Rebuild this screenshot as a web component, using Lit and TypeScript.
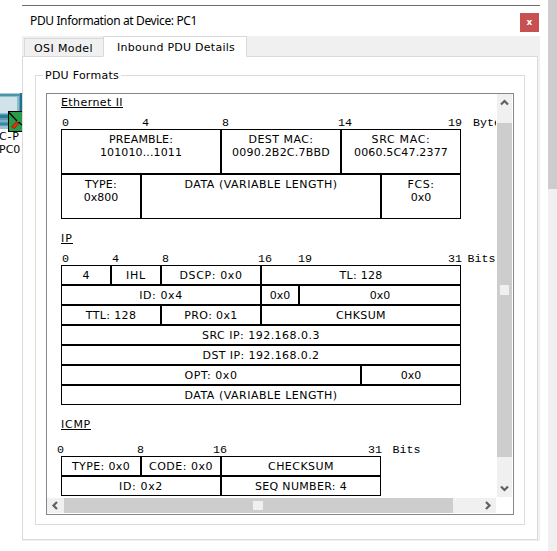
import { LitElement, html, css, svg } from "lit";
import { customElement, property } from "lit/decorators.js";
import { classMap } from "lit/directives/class-map.js";
import { styleMap } from "lit/directives/style-map.js";

interface Cell { w: number; lines: [string, number][]; }
interface Tick { x: number; label: string; }
interface Format { title: string; titleWidth: number; rowHeight: number; rulerGap: number; ticks: Tick[]; rows: Cell[][]; }

const c = (w: number, ...lines: [string, number][]): Cell => ({ w, lines });
const ticks = (...t: [number, string][]): Tick[] => t.map(([x, label]) => ({ x, label }));

const FORMATS: Format[] = [
  {
    title: "Ethernet II", titleWidth: 62, rowHeight: 45, rulerGap: 8,
    ticks: ticks([15, "0"], [95, "4"], [175, "8"], [291, "14"], [401, "19"], [426, "Bytes"]),
    rows: [
      [c(160, ["PREAMBLE:", 64], ["101010...1011", 82]), c(120, ["DEST MAC:", 65], ["0090.2B2C.7BBD", 98]), c(120, ["SRC MAC:", 59], ["0060.5C47.2377", 94])],
      [c(80, ["TYPE:", 32], ["0x800", 34.5]), c(240, ["DATA (VARIABLE LENGTH)", 153]), c(80, ["FCS:", 27], ["0x0", 20.5])],
    ],
  },
  {
    title: "IP", titleWidth: 12, rowHeight: 20, rulerGap: 8,
    ticks: ticks([15, "0"], [65, "4"], [115, "8"], [211, "16"], [251, "19"], [401, "31"], [420.5, "Bits"]),
    rows: [
      [c(50, ["4", 7]), c(50, ["IHL", 20]), c(100, ["DSCP: 0x0", 63]), c(200, ["TL: 128", 43])],
      [c(200, ["ID: 0x4", 43.5]), c(38, ["0x0", 20.5]), c(162, ["0x0", 20.5])],
      [c(100, ["TTL: 128", 50.5]), c(100, ["PRO: 0x1", 53.5]), c(200, ["CHKSUM", 50])],
      [c(400, ["SRC IP: 192.168.0.3", 118])],
      [c(400, ["DST IP: 192.168.0.2", 117])],
      [c(300, ["OPT: 0x0", 53]), c(100, ["0x0", 20.5])],
      [c(400, ["DATA (VARIABLE LENGTH)", 153])],
    ],
  },
  {
    title: "ICMP", titleWidth: 30, rowHeight: 20, rulerGap: 13,
    ticks: ticks([10, "0"], [90, "8"], [166, "16"], [321, "31"], [345.5, "Bits"]),
    rows: [
      [c(80, ["TYPE: 0x0", 58]), c(80, ["CODE: 0x0", 64]), c(160, ["CHECKSUM", 66])],
      [c(160, ["ID: 0x2", 44]), c(160, ["SEQ NUMBER: 4", 92])],
    ],
  },
];

/** A single-line label tracked out (or in) to a fixed advance width. */
@customElement("fit-label")
class FitLabel extends LitElement {
  @property({ type: String }) text = "";
  @property({ type: Number }) width = 0;

  static styles = css`
    :host { display: block; }
    span { display: inline-block; white-space: pre; }
  `;

  updated() {
    const span = this.renderRoot.querySelector("span")!;
    span.style.letterSpacing = "0";
    const natural = span.getBoundingClientRect().width;
    if (this.text.length > 1) {
      const gap = (this.width - natural) / this.text.length;
      span.style.letterSpacing = gap.toFixed(3) + "px";
    }
  }

  render() {
    return html`<span>${this.text}</span>`;
  }
}

@customElement("pdu-format")
class PduFormat extends LitElement {
  @property({ attribute: false }) data!: Format;

  static styles = css`
    :host { display: block; }
    .title { width: max-content; height: 11px; line-height: 13px; margin-left: 14px; border-bottom: 1px solid #000; }
    .ruler { display: flex; height: 13px; font: 11.67px/15px "Liberation Mono", monospace; white-space: pre; }
    .tick { flex: none; }
    .table { margin: 0 0 0 14px; }
    .row { display: flex; }
    .cell { box-sizing: border-box; flex: none; border: 1px solid #000; padding-top: 3px; text-align: center; line-height: 13px; }
  `;

  render() {
    const f = this.data;
    return html`
      <div class="title"><fit-label .text=${f.title} .width=${f.titleWidth}></fit-label></div>
      <div class="ruler" style=${styleMap({ marginTop: f.rulerGap + "px", paddingLeft: f.ticks[0].x + "px" })}>
        ${f.ticks.map((t, i) => {
          const next = f.ticks[i + 1];
          return html`<span class="tick" style=${styleMap({ width: next ? next.x - t.x + "px" : "auto" })}>${t.label}</span>`;
        })}
      </div>
      <div class="table">
        ${f.rows.map((row) => html`<div class="row">
          ${row.map((cell) => html`<div class="cell" style=${styleMap({ width: cell.w + "px", height: f.rowHeight + "px" })}>
            ${cell.lines.map(([t, w]) => html`<fit-label .text=${t} .width=${w}></fit-label>`)}
          </div>`)}
        </div>`)}
      </div>`;
  }
}

const arrow = (points: string) => html`<svg class="arrow" width="9" height="9" viewBox="0 0 9 9">
  ${svg`<path d=${points} fill="none" stroke="#606060" stroke-width="2.2"/>`}
</svg>`;

@customElement("app-root")
class AppRoot extends LitElement {
  static styles = css`
    :host { display: block; position: relative; width: 557px; height: 551px; overflow: hidden; background: #fff; color: #000; font: 11px/13px "DejaVu Sans", Verdana, sans-serif; }
    .layout { display: flex; height: 551px; }
    .canvas { flex: none; width: 22px; padding-top: 93px; overflow: hidden; box-sizing: border-box; }
    .canvas svg { display: block; }
    .device { width: 24px; line-height: 13px; white-space: pre; }
    .model { margin: -2px 0 0 -1px; letter-spacing: 0.8px; }
    .name { margin-left: -1px; }
    .window { flex: none; width: 518px; height: 541px; margin-right: 8px; display: flex; flex-direction: column; padding-top: 5px; box-sizing: border-box; }
    .titlebar { flex: none; height: 31px; box-sizing: border-box; border-top: 1px solid #6d6d6d; display: flex; justify-content: space-between; padding: 7px 1px 0 8px; }
    .caption { font: 12px/16px "Noto Sans", sans-serif; }
    .close { width: 19px; height: 19px; background: #c75050; color: #fff; font: bold 9px/18px "DejaVu Sans", sans-serif; text-align: center; }
    .body { flex: none; height: 505px; background: #f0f0f0; display: flex; flex-direction: column; }
    .tabs { flex: none; height: 21px; display: flex; align-items: flex-end; padding-left: 2px; z-index: 1; }
    .tab { box-sizing: border-box; border: 1px solid #d9d9d9; }
    .tab.rear { width: 80px; height: 19px; margin-right: -1px; padding: 3px 0 0 9px; }
    .tab.front { width: 144px; height: 21px; padding: 4px 0 0 13px; background: #fff; border-bottom-color: #fff; }
    .pane { flex: none; box-sizing: border-box; width: 516px; height: 484px; margin-top: -1px; border: 1px solid #dadada; background: #fff; padding: 18px 12px 14px; }
    .group { box-sizing: border-box; width: 490px; height: 450px; padding: 0 10px; border: 1px solid #dcdcdc; display: flex; flex-direction: column; }
    .legend { flex: none; width: max-content; height: 13px; margin: -7px 0 11px -3px; padding: 0 2px; background: #fff; }
    .frame { box-sizing: border-box; width: 468px; height: 422px; border: 1px solid #828790; display: grid; grid-template-columns: 450px 15px; grid-template-rows: 403px 1px 15px; flex: none; }
    .view { overflow: hidden; padding-top: 2px; width: 449px; box-sizing: border-box; height: 403px; }
    .vbar, .hbar { background: #f0f0f0; display: flex; align-items: center; box-sizing: border-box; }
    .vbar { flex-direction: column; height: 403px; padding-top: 4px; }
    .hbar { grid-row: 3; width: 449px; padding-left: 4px; }
    .arrow { flex: none; display: block; }
    .thumb { background: #cdcdcd; display: flex; align-items: center; justify-content: center; flex: none; box-sizing: border-box; }
    .vbar .thumb { width: 15px; height: 334px; margin: 16px 0 27px; }
    .hbar .thumb { width: 389px; height: 15px; margin: 0 30px 0 4px; padding-right: 1px; }
    .grip { width: 10px; height: 9px; background: #f0f0f0; }
    .vbar .grip { width: 9px; height: 10px; }
    .outer { flex: none; width: 9px; height: 551px; background: #f0f0f0; }
    .outer-thumb { height: 189px; background: #cdcdcd; }
    .spaced { margin-top: 13px; }
  `;

  render() {
    return html`
      <div class="layout">
        <div class="canvas">
          <svg width="22" height="39" viewBox="0 0 22 39">
            <g shape-rendering="crispEdges">
              <rect width="22" height="36" fill="#5b9bb3"/>
              <rect width="22" height="1" fill="#a9c9d5"/>
              <rect y="1" width="20" height="2" fill="#4b94ad"/>
              <rect x="20" width="2" height="36" fill="#1c7391"/>
              <rect y="3" width="19" height="18" fill="#8dbccc"/>
              <rect y="4" width="17" height="16" fill="#d0e3ea"/>
              <rect y="22" width="20" height="3" fill="#2c7c98"/>
              <rect y="27" width="20" height="2" fill="#7db0c3"/>
              <rect y="30" width="20" height="2" fill="#3c86a1"/>
              <rect y="33" width="22" height="3" fill="#9cc3d1"/>
              <rect x="8" y="18" width="14" height="21" fill="#000"/>
              <rect x="9" y="19" width="13" height="19" fill="#2c9a4b"/>
            </g>
            <path d="M9 19.500l8 8.500M18.500 29l3.500 3" stroke="#000" stroke-width="1.2" fill="none"/>
            <path d="M11.500 34l4.500-5 3 1-4.500 5.500z" fill="#f52a00" stroke="#400" stroke-width=".4"/>
          </svg>
          <div class="device model">C-P</div>
          <div class="device name">PC0</div>
        </div>
        <div class="window">
          <div class="titlebar">
            <fit-label class="caption" .text=${"PDU Information at Device: PC1"} .width=${167}></fit-label>
            <div class="close">x</div>
          </div>
          <div class="body">
            <div class="tabs">
              <div class="tab rear"><fit-label .text=${"OSI Model"} .width=${59}></fit-label></div>
              <div class="tab front"><fit-label .text=${"Inbound PDU Details"} .width=${118}></fit-label></div>
            </div>
            <div class="pane">
              <div class="group">
                <div class="legend"><fit-label .text=${"PDU Formats"} .width=${74}></fit-label></div>
                <div class="frame">
                  <div class="view">
                    ${FORMATS.map((f, i) => html`<pdu-format class=${classMap({ spaced: i > 0 })} .data=${f}></pdu-format>`)}
                  </div>
                  <div class="vbar">
                    ${arrow("M1 6.5L4.500 3L8 6.500")}
                    <div class="thumb"><div class="grip"></div></div>
                    ${arrow("M1 2.500L4.500 6L8 2.500")}
                  </div>
                  <div class="hbar">
                    ${arrow("M6 1L2.500 4.500L6 8")}
                    <div class="thumb"><div class="grip"></div></div>
                    ${arrow("M3 1L6.500 4.500L3 8")}
                  </div>
                </div>
              </div>
            </div>
          </div>
        </div>
        <div class="outer"><div class="outer-thumb"></div></div>
      </div>`;
  }
}
